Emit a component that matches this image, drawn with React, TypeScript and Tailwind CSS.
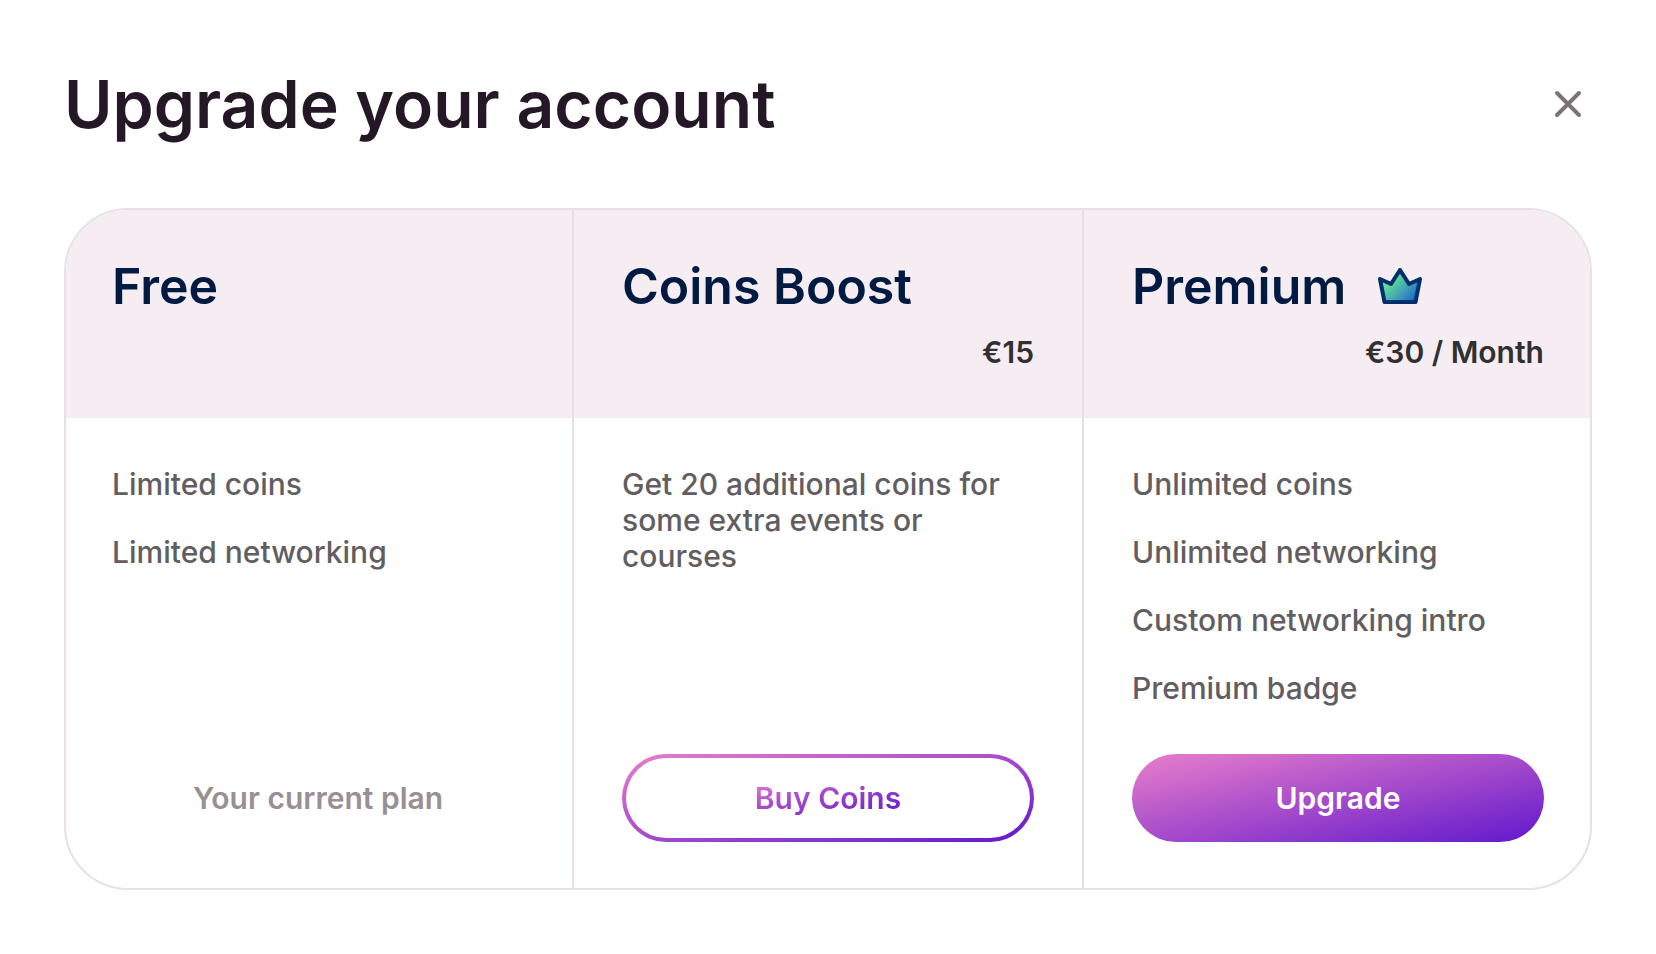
import React from "react";
import clsx from "clsx";

const CloseIcon = () => (
  <svg className="size-8" viewBox="0 0 32 32" fill="none" aria-hidden="true">
    <path d="M5 5L27 27M27 5L5 27" stroke="#7b7477" strokeWidth="4" strokeLinecap="round" />
  </svg>
);

const CrownIcon = () => (
  <svg className="h-9 w-11" viewBox="0 0 44 36" aria-hidden="true">
    <defs>
      <linearGradient id="crown" x1="8" y1="8" x2="36" y2="34" gradientUnits="userSpaceOnUse">
        <stop offset="0.2" stopColor="#5fdc98" />
        <stop offset="1" stopColor="#1e63d0" />
      </linearGradient>
    </defs>
    <path
      d="M22 2L31 16L42 11L37.5 34H6.5L2 11L13 16Z"
      fill="url(#crown)"
      stroke="#002f6c"
      strokeWidth="4"
      strokeLinejoin="round"
    />
  </svg>
);

type PlanProps = {
  name: string;
  price?: string;
  icon?: React.ReactNode;
  features: string[];
  className?: string;
  padding: string;
  children: React.ReactNode;
};

const Plan = ({ name, price, icon, features, className, padding, children }: PlanProps) => {
  return (
    <section className={clsx("flex flex-col overflow-hidden border-[#e8e0e4]", className)}>
      <div className={clsx("h-52 bg-[#f6edf2] pt-12", padding)}>
        <h2 className="flex items-center gap-8 text-[50px] leading-14 font-semibold text-[#001a41]">
          {name}
          {icon}
        </h2>
        {price && (
          <p className="mt-5 text-right text-[30px] leading-9 font-semibold text-[#322f30]">{price}</p>
        )}
      </div>
      <div className={clsx("flex flex-1 flex-col pt-12 pb-[46px]", padding)}>
        <ul className="flex flex-col gap-8 text-[30px] leading-9 font-medium text-[#625d60]">
          {features.map((feature) => (
            <li key={feature} className="max-w-96">
              {feature}
            </li>
          ))}
        </ul>
        <div className="mt-auto flex flex-col pt-12 text-[30px] leading-9 font-semibold">{children}</div>
      </div>
    </section>
  );
};

const App = () => {
  return (
    <main
      className="min-h-screen bg-white px-16 py-16"
      style={{ fontFamily: 'Inter, "Liberation Sans", sans-serif' }}
    >
      <header className="mb-16 flex items-center justify-between pr-2">
        <h1 className="text-[66px] leading-20 font-semibold text-[#241827]">Upgrade your account</h1>
        <button type="button" aria-label="Close" className="cursor-pointer">
          <CloseIcon />
        </button>
      </header>
      <div className="grid grid-cols-[510fr_508fr_510fr]">
        <Plan
          name="Free"
          features={["Limited coins", "Limited networking"]}
          className="rounded-l-[64px] border-2"
          padding="pr-12 pl-[46px]"
        >
          <p className="py-[26px] text-center text-[#989093]">Your current plan</p>
        </Plan>
        <Plan
          name="Coins Boost"
          price="€15"
          features={["Get 20 additional coins for some extra events or courses"]}
          className="border-y-2"
          padding="px-12"
        >
          <button
            type="button"
            className="w-full cursor-pointer rounded-full bg-linear-[to_bottom_right,#e87fcb,#a64bcb_50%,#6018cc] p-1"
          >
            <span className="flex h-20 items-center justify-center rounded-full bg-white">
              <span className="bg-linear-[to_bottom_right,#e87fcb,#a64bcb_40%,#6018cc] bg-clip-text text-transparent">
                Buy Coins
              </span>
            </span>
          </button>
        </Plan>
        <Plan
          name="Premium"
          price="€30 / Month"
          icon={<CrownIcon />}
          features={["Unlimited coins", "Unlimited networking", "Custom networking intro", "Premium badge"]}
          className="rounded-r-[64px] border-2"
          padding="pr-[46px] pl-12"
        >
          <button
            type="button"
            className="h-[88px] w-full cursor-pointer rounded-full bg-linear-[to_bottom_right,#e87fcb,#a64bcb_50%,#6018cc] text-white"
          >
            Upgrade
          </button>
        </Plan>
      </div>
    </main>
  );
};

export default App;
